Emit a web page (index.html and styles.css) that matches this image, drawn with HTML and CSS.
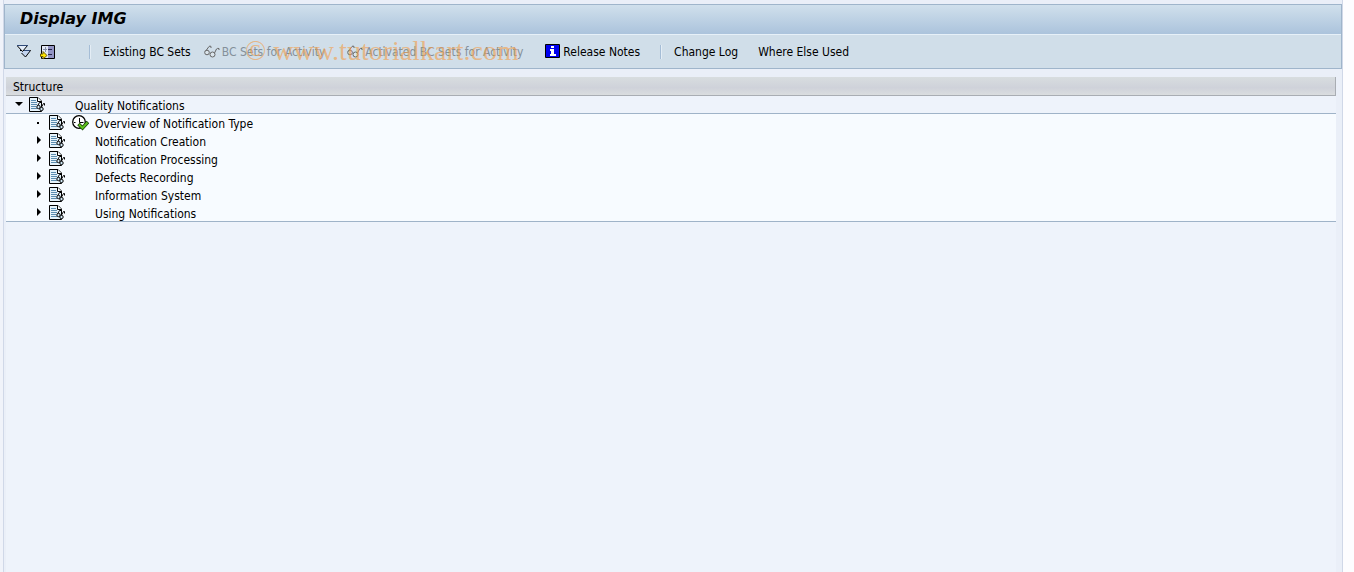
FILE: index.html
```html
<!DOCTYPE html>
<html lang="en">
<head>
  <meta charset="utf-8">
  <title>Display IMG</title>
  <link rel="stylesheet" href="styles.css">
</head>
<body>

<svg class="defs" aria-hidden="true">
  <symbol id="doc" viewBox="0 0 16 16">
    <path d="M.5.500h8.500l3.500 3.500v10.500H.5z" fill="#e6f3fb" stroke="#000"/>
    <path d="M8.500.5v4h4" fill="#fff" stroke="#000"/>
    <path d="M2 3.500h5M2 5.500h6M2 7.500h6M2 9.500h5M2 11.500h6" stroke="#5c8db0" fill="none"/>
    <path d="M8.500 9l2-3.500h1.500M12.500 10l2-3.500h1v2" stroke="#000" fill="none"/>
    <circle cx="9.500" cy="10" r="1.700" fill="#d4ecfa" stroke="#000"/>
    <circle cx="12.500" cy="12" r="1.700" fill="#d4ecfa" stroke="#000"/>
  </symbol>
  <symbol id="glasses" viewBox="0 0 16 14">
    <path d="M1 7l4-5.500q1-1 2 0v1.500M10 9l2.500-5q1-1 2.500-.5v1.500" stroke="#666" fill="none"/>
    <circle cx="3" cy="7.500" r="2.300" fill="#dbe5ec" stroke="#666"/>
    <circle cx="8.500" cy="9.500" r="2.500" fill="#dbe5ec" stroke="#666"/>
  </symbol>
</svg>

<div class="window">
  <header>
    <h1>Display IMG</h1>
    <div class="toolbar">
      <button class="icon" aria-label="Expand all">
        <svg width="16" height="14" viewBox="0 0 16 14">
          <path d="M3 5.500h10.500l-5 6.500-4-4" fill="#c3d5f0" stroke="#000"/>
          <path d="M0 .5h10.500l-5 6z" fill="#e4eefa" stroke="#000"/>
          <path d="M0 .5h11M7 5.500h6" stroke="#2f4a78"/>
        </svg>
      </button>
      <button class="icon" aria-label="Position">
        <svg width="16" height="16" viewBox="0 0 16 16">
          <path d="M1.500 1.500h13v13h-13z" fill="#e3e9f6" stroke="#000"/>
          <path d="M8 2h6v12H8z" fill="#9294c4"/>
          <path d="M8 5.500h4M8 10.500h4" stroke="#26264a"/>
          <path d="M3 5.500h4M5.500 3v5" stroke="#8790a8"/>
          <path d="M.5 10h2.500v-2.500l4 4-4 3.500v-2.500H.5z" fill="#ffe600" stroke="#6b5a00"/>
        </svg>
      </button>
      <span class="sep"></span>
      <button class="existing">Existing BC Sets</button>
      <button disabled><svg width="16" height="14"><use href="#glasses"/></svg>BC Sets for Activity</button>
      <button disabled><svg width="16" height="14"><use href="#glasses"/></svg>Activated BC Sets for Activity</button>
      <button>
        <svg width="16" height="16" viewBox="0 0 16 16">
          <path d="M.5.500h14v13H.5z" fill="#0000f0" stroke="#000"/>
          <path d="M6 2h3v2H6zM5 5h4v5h2v2H5v-2h1V7H5z" fill="#fff"/>
        </svg>Release Notes</button>
      <span class="sep"></span>
      <button>Change Log</button>
      <button>Where Else Used</button>
      <span class="watermark">© www.tutorialkart.com</span>
    </div>
  </header>

  <main>
    <h2>Structure</h2>
    <ul class="tree">
      <li>
        <div class="row root"><i class="open"></i><svg class="doc"><use href="#doc"/></svg><span class="act"></span>Quality Notifications</div>
        <ul>
          <li class="row"><i class="leaf"></i><svg class="doc"><use href="#doc"/></svg><span class="act">
            <svg width="17" height="16" viewBox="0 0 17 16">
              <circle cx="7" cy="7" r="6.300" fill="#fff" stroke="#000" stroke-width="1.300"/>
              <path d="M7.500 3v4.500h4M7.500 11v1.500M2 7.500h1.500" stroke="#000" fill="none"/>
              <path d="M6.500 9l4 4 5.500-6" stroke="#123c00" stroke-width="3.500" fill="none"/>
              <path d="M7 9.500l3.500 3.500 5-5.500" stroke="#5fc21e" stroke-width="2" fill="none"/>
            </svg></span>Overview of Notification Type</li>
          <li class="row"><i class="closed"></i><svg class="doc"><use href="#doc"/></svg><span class="act"></span>Notification Creation</li>
          <li class="row"><i class="closed"></i><svg class="doc"><use href="#doc"/></svg><span class="act"></span>Notification Processing</li>
          <li class="row"><i class="closed"></i><svg class="doc"><use href="#doc"/></svg><span class="act"></span>Defects Recording</li>
          <li class="row"><i class="closed"></i><svg class="doc"><use href="#doc"/></svg><span class="act"></span>Information System</li>
          <li class="row"><i class="closed"></i><svg class="doc"><use href="#doc"/></svg><span class="act"></span>Using Notifications</li>
        </ul>
      </li>
    </ul>
  </main>
</div>

</body>
</html>
```
FILE: styles.css
```css
* {
  box-sizing: border-box;
}

body {
  margin: 0;
  padding-left: 3px;
  background: #fdfdff linear-gradient(#f0f3fa, #f0f3fa) no-repeat 0 0 / 3px 100%;
  font: 12px/18px "DejaVu Sans Condensed", "Noto Sans", sans-serif;
  color: #000;
}

.defs {
  display: none;
}

.window {
  display: flex;
  flex-direction: column;
  min-height: 100vh;
  margin-right: 11px;
  padding-top: 4px;
  border: solid #d0d8e8;
  border-width: 0 1px;
  background: #eaeff8;
}

header {
  border: 1px solid #9fb5cb;
  background: #d0dee9;
}

h1 {
  margin: 0;
  padding: 0 15px;
  height: 30px;
  border-bottom: 1px solid #e6f0f8;
  background: linear-gradient(#d0e0ec, #abc3dc);
  font: italic bold 16px/27px "DejaVu Sans", sans-serif;
}

.toolbar {
  position: relative;
  display: flex;
  align-items: center;
  height: 33px;
  padding-left: 12px;
}

button {
  display: flex;
  align-items: center;
  gap: 2px;
  margin-right: 20px;
  padding: 0;
  border: 0;
  background: none;
  font: inherit;
  color: inherit;
  white-space: nowrap;
}

button:disabled {
  margin-right: 22px;
  color: #84909a;
}

.icon {
  margin-right: 7px;
}

.icon + .sep {
  margin-left: 26px;
}

.existing {
  margin-right: 13px;
}

.sep {
  width: 2px;
  height: 14px;
  margin-right: 12px;
  border-left: 1px solid #a5bdd6;
  border-right: 1px solid #e4edf5;
}

.watermark {
  position: absolute;
  left: 240px;
  top: 1px;
  font: 28px/30px "Liberation Serif", serif;
  color: rgba(240, 160, 80, .65);
  pointer-events: none;
}

main {
  flex: 1;
  margin: 8px 6px 0 2px;
  background: #eef3fb;
}

h2 {
  margin: 0;
  padding-left: 7px;
  height: 19px;
  border: solid #a9adb3;
  border-width: 0 1px 1px 0;
  background: linear-gradient(#d8dddf, #cfd2da 60%, #dadddf);
  font: inherit;
  line-height: 20px;
}

.tree,
.tree ul {
  margin: 0;
  padding: 0;
  list-style: none;
}

.row {
  display: flex;
  height: 18px;
  padding: 1px 0 0 29px;
  background: #f7fbff;
}

.root {
  padding-left: 9px;
  background: #eef3fb;
}

.root,
.row:last-child {
  border-bottom: 1px solid #9fb3c8;
}

.row i {
  width: 14px;
}

.row i::before {
  content: "";
  display: block;
  width: 0;
}

.row .open::before {
  margin-top: 5px;
  border: solid transparent;
  border-width: 4px 4px 0;
  border-top-color: #000;
}

.row .closed::before {
  margin: 3px 0 0 2px;
  border: solid transparent;
  border-width: 4px 0 4px 4px;
  border-left-color: #000;
}

.row .leaf::before {
  margin: 7px 0 0 2px;
  width: 2px;
  height: 2px;
  background: #000;
}

.doc {
  width: 16px;
  height: 16px;
}

.act {
  flex: none;
  width: 30px;
  padding-left: 7px;
}

.act svg {
  display: block;
}
```
